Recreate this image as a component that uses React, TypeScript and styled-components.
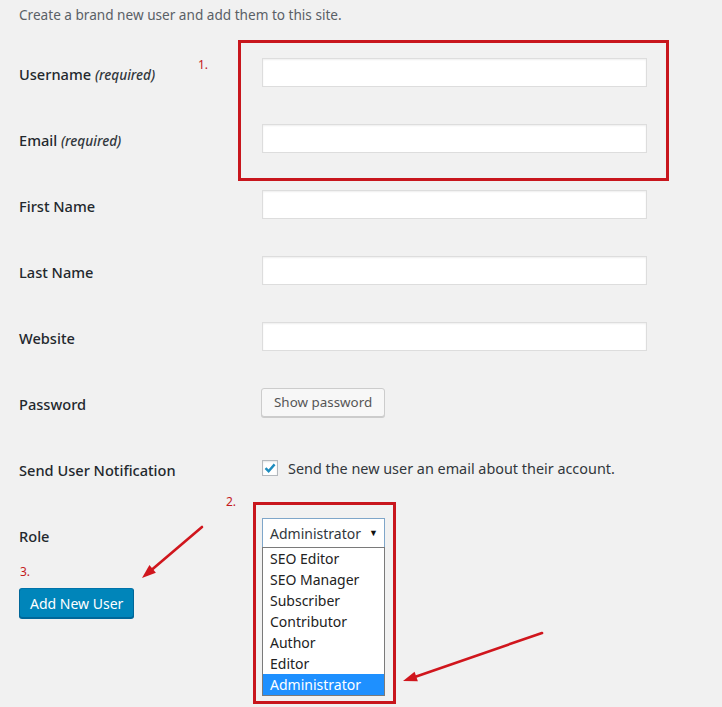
import React from "react";
import styled, { createGlobalStyle } from "styled-components";

const GlobalStyle = createGlobalStyle`
  html, body {
    margin: 0;
    padding: 0;
    background: #f1f1f1;
  }
  body {
    font-family: "Noto Sans", "Open Sans", sans-serif;
    color: #23282d;
  }
  * { box-sizing: border-box; }
`;

const Page = styled.div`
  position: relative;
  width: 722px;
  height: 707px;
  overflow: hidden;
  padding-left: 19px;
  background: #f1f1f1;
`;

const Intro = styled.p`
  margin: 0 0 15px;
  padding-top: 5px;
  font-size: 13.6px;
  line-height: 19px;
  color: #5a6066;
`;

const FormTable = styled.div`
  display: flex;
  flex-direction: column;
`;

const Row = styled.div`
  display: grid;
  grid-template-columns: 243px 1fr;
  align-items: center;
  height: 66px;
`;

const Label = styled.label`
  padding-top: 4px;
  font-size: 14.6px;
  font-weight: 500;
  color: #23282d;
  white-space: nowrap;
`;

const Required = styled.span`
  font-size: 13.6px;
  font-style: italic;
  font-weight: 500;
  color: #32373c;
`;

const Field = styled.div`
  position: relative;
  display: flex;
  align-items: center;
`;

const TextInput = styled.input`
  width: 385px;
  height: 29px;
  margin: 0;
  border: 1px solid #dddddd;
  background: #fff;
  box-shadow: inset 0 1px 2px rgba(0, 0, 0, 0.07);
  outline: none;
  font: inherit;
`;

const SecondaryButton = styled.button`
  margin-left: -1px;
  height: 29px;
  padding: 0 12px;
  border: 1px solid #cccccc;
  border-radius: 3px;
  background: #f7f7f7;
  box-shadow: 0 1px 0 #cccccc;
  font-family: inherit;
  font-size: 13.4px;
  color: #555555;
  cursor: pointer;
`;

const CheckLabel = styled.label`
  display: flex;
  align-items: center;
  gap: 10px;
  font-size: 14.4px;
  color: #32373c;
`;

const CheckBox = styled.span`
  display: inline-flex;
  align-items: center;
  justify-content: center;
  width: 16px;
  height: 16px;
  border: 1px solid #b4b9be;
  background: #fff;
  box-shadow: inset 0 1px 2px rgba(0, 0, 0, 0.1);
`;

const SelectBox = styled.div`
  display: flex;
  align-items: center;
  justify-content: space-between;
  width: 123px;
  height: 31px;
  margin-top: -2px;
  padding: 0 6px 0 7px;
  border: 1px solid #7fa6c9;
  background: #fff;
  font-size: 14px;
  color: #32373c;
`;

const Caret = styled.span`
  font-size: 9px;
  color: #111;
  margin-top: -2px;
`;

const OptionList = styled.ul`
  position: absolute;
  left: 0;
  top: 100%;
  width: 123px;
  margin: -2px 0 0;
  padding: 0;
  list-style: none;
  border: 1px solid #7a7a7a;
  background: #fff;
  z-index: 2;
`;

const OptionItem = styled.li<{ $active?: boolean }>`
  height: 21px;
  padding-left: 7px;
  font-size: 14px;
  line-height: 21px;
  color: ${(p) => (p.$active ? "#ffffff" : "#222222")};
  background: ${(p) => (p.$active ? "#1e90ff" : "transparent")};
`;

const SubmitRow = styled.div`
  margin-top: 21px;
`;

const PrimaryButton = styled.button`
  height: 30px;
  padding: 0 10px;
  border: 1px solid #0073aa;
  border-color: #0073aa #006799 #006799;
  border-radius: 3px;
  background: #0085ba;
  box-shadow: 0 1px 0 #006799;
  font-family: inherit;
  font-size: 14px;
  color: #fff;
  cursor: pointer;
`;

/* ---------- annotation overlays ---------- */

const RedBox = styled.div<{ $x: number; $y: number; $w: number; $h: number }>`
  position: absolute;
  left: ${(p) => p.$x}px;
  top: ${(p) => p.$y}px;
  width: ${(p) => p.$w}px;
  height: ${(p) => p.$h}px;
  border: 3px solid #c8161d;
  pointer-events: none;
  z-index: 3;
`;

const StepNumber = styled.span<{ $x: number; $y: number }>`
  position: absolute;
  left: ${(p) => p.$x}px;
  top: ${(p) => p.$y}px;
  font-size: 12px;
  line-height: 14px;
  color: #c41a22;
  z-index: 3;
`;

const ArrowLayer = styled.svg`
  position: absolute;
  left: 0;
  top: 0;
  width: 722px;
  height: 707px;
  pointer-events: none;
  z-index: 4;
`;

const Arrow: React.FC<{ x1: number; y1: number; x2: number; y2: number }> = ({ x1, y1, x2, y2 }) => {
  const ang = Math.atan2(y2 - y1, x2 - x1);
  const len = 14;
  const half = 5;
  const bx = x2 - Math.cos(ang) * len;
  const by = y2 - Math.sin(ang) * len;
  const px = -Math.sin(ang) * half;
  const py = Math.cos(ang) * half;
  return (
    <g>
      <line x1={x1} y1={y1} x2={bx} y2={by} stroke="#d0161d" strokeWidth={2.6} strokeLinecap="round" />
      <polygon points={`${x2},${y2} ${bx + px},${by + py} ${bx - px},${by - py}`} fill="#d0161d" />
    </g>
  );
};

const roles = ["SEO Editor", "SEO Manager", "Subscriber", "Contributor", "Author", "Editor", "Administrator"];

export default function App() {
  return (
    <Page>
      <GlobalStyle />
      <Intro>Create a brand new user and add them to this site.</Intro>
      <FormTable>
        <Row>
          <Label>
            Username <Required>(required)</Required>
          </Label>
          <Field>
            <TextInput type="text" />
          </Field>
        </Row>
        <Row>
          <Label>
            Email <Required>(required)</Required>
          </Label>
          <Field>
            <TextInput type="email" />
          </Field>
        </Row>
        <Row>
          <Label>First Name</Label>
          <Field>
            <TextInput type="text" />
          </Field>
        </Row>
        <Row>
          <Label>Last Name</Label>
          <Field>
            <TextInput type="text" />
          </Field>
        </Row>
        <Row>
          <Label>Website</Label>
          <Field>
            <TextInput type="url" />
          </Field>
        </Row>
        <Row>
          <Label>Password</Label>
          <Field>
            <SecondaryButton type="button">Show password</SecondaryButton>
          </Field>
        </Row>
        <Row>
          <Label>Send User Notification</Label>
          <Field>
            <CheckLabel>
              <CheckBox>
                <svg width="14" height="14" viewBox="0 0 14 14">
                  <path d="M2.5 7.2 L5.6 10.2 L11.6 3.4" fill="none" stroke="#1e8cbe" strokeWidth="2.4" />
                </svg>
              </CheckBox>
              Send the new user an email about their account.
            </CheckLabel>
          </Field>
        </Row>
        <Row>
          <Label>Role</Label>
          <Field>
            <SelectBox>
              Administrator
              <Caret>▼</Caret>
            </SelectBox>
            <OptionList>
              {roles.map((r) => (
                <OptionItem key={r} $active={r === "Administrator"}>
                  {r}
                </OptionItem>
              ))}
            </OptionList>
          </Field>
        </Row>
      </FormTable>
      <SubmitRow>
        <PrimaryButton type="button">Add New User</PrimaryButton>
      </SubmitRow>

      <RedBox $x={238} $y={40} $w={431} $h={141} />
      <RedBox $x={253} $y={502} $w={143} $h={202} />
      <StepNumber $x={198} $y={58}>1.</StepNumber>
      <StepNumber $x={226} $y={495}>2.</StepNumber>
      <StepNumber $x={20} $y={565}>3.</StepNumber>
      <ArrowLayer viewBox="0 0 722 707">
        <Arrow x1={202} y1={527} x2={142} y2={578} />
        <Arrow x1={542} y1={633} x2={403} y2={681} />
      </ArrowLayer>
    </Page>
  );
}
